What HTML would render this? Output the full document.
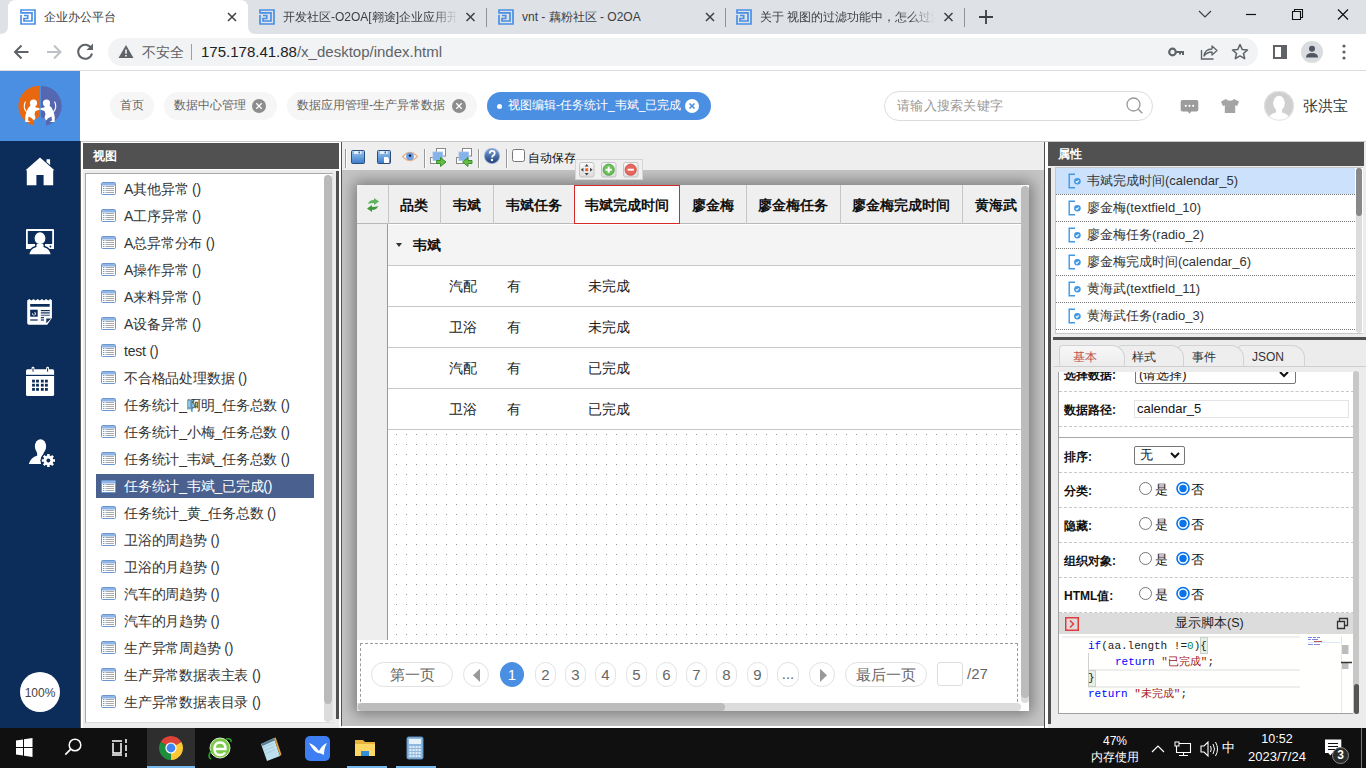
<!DOCTYPE html>
<html><head><meta charset="utf-8">
<style>
*{box-sizing:border-box;margin:0;padding:0}
html,body{width:1366px;height:768px;overflow:hidden;background:#fff;font-family:"Liberation Sans",sans-serif;color:#333;font-size:13px}
.a{position:absolute}
.nw{white-space:nowrap}
/* chrome */
#tabstrip{left:0;top:0;width:1366px;height:34px;background:#dee1e6}
.tab{top:0;height:34px;width:240px}
.tab .t{position:absolute;left:36px;top:9px;font-size:12px;color:#3c4043;white-space:nowrap;overflow:hidden;width:175px}
.fav{left:12px;top:9px}
.fade{-webkit-mask-image:linear-gradient(90deg,#000 150px,transparent 175px)}
.sep{width:1px;height:20px;background:#8b8d91;top:7px}
#toolbar{left:0;top:34px;width:1366px;height:37px;background:#fff;border-bottom:1px solid #dadce0}
#omni{left:108px;top:38px;width:1150px;height:28px;border-radius:14px;background:#f1f3f4}
/* app */
#logo{left:0;top:71px;width:80px;height:70px;background:#4a8fe1}
#nav{left:0;top:141px;width:80px;height:587px;background:#0c2c59}
#apphead{left:80px;top:71px;width:1286px;height:70px;background:#fff}
.pill{top:92px;height:28px;border-radius:14px;background:#f6f6f6;font-size:12px;color:#666;line-height:27px;white-space:nowrap}
.xc{position:absolute;top:7px;width:14px;height:14px;border-radius:7px;background:#8d8d8d}
.vi{position:absolute;left:0;width:218px;height:27px;white-space:nowrap;font-size:14px;color:#333;line-height:27px}
.vi span{position:absolute;left:28px;top:2px;letter-spacing:-0.2px}
.vi.sel span{top:0}
.vic{position:absolute;left:5px;top:8px;display:block}
.vi.sel{background:#4a6190;color:#fff;top:300px;height:24px;line-height:24px}
.vi.sel .vic{top:6px}
.xc svg{display:block}
.hl{position:absolute;left:31px;width:640px;height:1px;background:#c8c8c8}
.vl{position:absolute;top:0;width:1px;height:39px;background:#c6c6c6}
.th{position:absolute;top:1px;height:39px;line-height:39px;text-align:center;font-size:14px;font-weight:bold;color:#111;white-space:nowrap}
.td{position:absolute;font-size:14px;color:#222;line-height:20px;white-space:nowrap;letter-spacing:0}
.dots{background-image:radial-gradient(circle at 0.5px 0.5px,#9a9a9a 0.6px,transparent 0.9px);background-size:10px 10px;background-position:8px 4px}
.pg{position:absolute;top:477px;height:25px;border:1px solid #e2e2e2;border-radius:12px;text-align:center;font-size:15px;color:#666;line-height:23px;white-space:nowrap;background:#fff}
.pi{position:absolute;left:0;width:299px;height:27px;border-bottom:1px dotted #777;white-space:nowrap;font-size:13px;color:#333;line-height:26px}
.pi span{position:absolute;left:31px;top:0}
.pic{position:absolute;left:11px;top:5px;display:block}
.ptab{position:absolute;top:345px;height:21px;border:1px solid #d2d2d2;border-bottom:0;border-radius:4px 13px 0 0;background:#eeeeee;font-size:12px;color:#333;line-height:23px;padding-left:13px}
.lab{position:absolute;left:5px;font-size:12px;font-weight:bold;color:#111;line-height:18px;white-space:nowrap;margin-top:1px}
.dl{position:absolute;left:0;width:295px;height:0;border-top:1px dashed #c8c8c8}
.ro{position:absolute;left:96px;font-size:13px;color:#111;line-height:18px}
.ro2{position:absolute;left:132px;font-size:13px;color:#111;line-height:18px}
.code{position:absolute;font-family:"Liberation Mono",monospace;font-size:11px;line-height:16px;color:#222;white-space:pre;margin-top:1px}
.kw{color:#0000ff}.st{color:#a31515}
#taskbar{left:0;top:728px;width:1366px;height:40px;background:#101010}
</style></head><body>

<!-- ============ CHROME TAB STRIP ============ -->
<div id="tabstrip" class="a"></div>
<svg class="a" style="left:0;top:0" width="1366" height="34">
  <path d="M0 34 Q8 34 8 26 L8 8 Q8 0 16 0 L240 0 Q248 0 248 8 L248 26 Q248 34 256 34 Z" fill="#fff"/>
</svg>
<div class="a tab" style="left:8px">
  <svg class="a fav" width="16" height="16" viewBox="0 0 16 16"><use href="#favi"/></svg>
  <div class="t">企业办公平台</div>
</div>
<div class="a tab" style="left:247px">
  <svg class="a fav" width="16" height="16" viewBox="0 0 16 16"><use href="#favi"/></svg>
  <div class="t fade">开发社区-O2OA[翱途]企业应用开发平台</div>
</div>
<div class="a tab" style="left:486px">
  <svg class="a fav" width="16" height="16" viewBox="0 0 16 16"><use href="#favi"/></svg>
  <div class="t">vnt - 藕粉社区 - O2OA</div>
</div>
<div class="a tab" style="left:724px">
  <svg class="a fav" width="16" height="16" viewBox="0 0 16 16"><use href="#favi"/></svg>
  <div class="t fade">关于 视图的过滤功能中，怎么过滤</div>
</div>
<svg width="0" height="0" style="position:absolute">
  <defs>
   <g id="favi"><path d="M1 6V15H15V1H1V3.8H12V12H4V9.5H7.7V6.5H4" stroke="#4a90e6" stroke-width="1.7" fill="none" stroke-linejoin="miter"/></g>
   <g id="xx"><path d="M-4 -4L4 4M4 -4L-4 4" stroke="#3c4043" stroke-width="1.5"/></g>
   <g id="listico"><rect x="0.5" y="0.5" width="14" height="12" rx="1" fill="#fff" stroke="#6b97d2"/><rect x="1" y="1" width="13" height="2.5" fill="#8fb4e6"/><path d="M4.5 4.5h8.5M4.5 6.5h8.5M4.5 8.5h8.5M4.5 10.5h8.5" stroke="#a9a9a9" stroke-width="1"/><path d="M2 4.5h1.4M2 6.5h1.4M2 8.5h1.4M2 10.5h1.4" stroke="#46a6f5" stroke-width="1"/></g>
   <g id="propico"><path d="M8 1.2H2.2V14.8H8" stroke="#3f98e6" stroke-width="1.4" fill="none"/><circle cx="10.4" cy="8.2" r="3.3" fill="#3f98e6"/><path d="M8.8 8.3l1.1 1.1 1.9-2" stroke="#fff" stroke-width="1.1" fill="none"/></g>
  </defs>
</svg>
<svg class="a" style="left:0;top:0" width="1366" height="34">
  <use href="#xx" x="232" y="17"/><use href="#xx" x="470.5" y="17"/><use href="#xx" x="710" y="17"/><use href="#xx" x="948.5" y="17"/>
  <path d="M486.5 8v19M725.5 8v19M964.5 8v19" stroke="#8f9297" stroke-width="1"/>
  <path d="M986 10v14M979 17h14" stroke="#3c4043" stroke-width="1.8"/>
  <path d="M1199 11l6 6 6-6" stroke="#3c4043" stroke-width="1.2" fill="none"/>
  <path d="M1246 14.5h10" stroke="#111" stroke-width="1.2"/>
  <path d="M1292.5 11.5h8v8h-8z" stroke="#111" stroke-width="1.1" fill="none"/>
  <path d="M1294.5 11.5v-2h8v8h-2" stroke="#111" stroke-width="1.1" fill="none"/>
  <path d="M1338 9.5l10 10M1348 9.5l-10 10" stroke="#111" stroke-width="1.2"/>
</svg>

<!-- ============ CHROME TOOLBAR ============ -->
<div id="toolbar" class="a"></div>
<div id="omni" class="a"></div>
<svg class="a" style="left:0;top:34px" width="1366" height="37">
  <!-- back -->
  <path d="M28.5 18H16M21.5 11.5L15 18l6.5 6.5" stroke="#5f6368" stroke-width="2" fill="none"/>
  <path d="M47 18h12.5M54 11.5l6.5 6.5-6.5 6.5" stroke="#bdc1c6" stroke-width="2" fill="none"/>
  <!-- reload -->
  <path d="M91.2 14.2A7 7 0 1 0 92 19.5" stroke="#5f6368" stroke-width="2" fill="none"/>
  <path d="M93 9.5v6.5h-6.5z" fill="#5f6368"/>
  <!-- warning -->
  <path d="M126 11L133.5 24h-15z" fill="#5f6368"/>
  <path d="M126 15.5v4.2M126 21v1.5" stroke="#fff" stroke-width="1.5"/>
  <path d="M191.5 10v16" stroke="#9aa0a6" stroke-width="1"/>
  <!-- key -->
  <circle cx="1172.5" cy="18" r="3.3" stroke="#5f6368" stroke-width="2.2" fill="none"/>
  <path d="M1175.5 18h7.5v3M1180 18v2.5" stroke="#5f6368" stroke-width="2" fill="none"/>
  <!-- share -->
  <path d="M1201.5 16v9h12" stroke="#5f6368" stroke-width="1.4" fill="none"/>
  <path d="M1204 22q1-7 8-7v-3l5 4.5-5 4.5v-3q-5 0-8 4z" stroke="#5f6368" stroke-width="1.3" fill="none" stroke-linejoin="round"/>
  <!-- star -->
  <path d="M1240 10.5l2.2 4.9 5.3.5-4 3.6 1.2 5.2-4.7-2.8-4.7 2.8 1.2-5.2-4-3.6 5.3-.5z" stroke="#5f6368" stroke-width="1.5" fill="none" stroke-linejoin="round"/>
  <!-- sidebar -->
  <rect x="1273" y="11" width="14" height="14" fill="#5f6368"/><rect x="1275" y="13" width="6" height="10" fill="#fff"/>
  <!-- profile -->
  <circle cx="1312" cy="18" r="11" fill="#dadce0"/>
  <circle cx="1312" cy="14.8" r="3" fill="#4e5563"/>
  <path d="M1306 23.5q0-4.5 6-4.5t6 4.5z" fill="#4e5563"/>
  <circle cx="1344" cy="12" r="1.6" fill="#5f6368"/><circle cx="1344" cy="18" r="1.6" fill="#5f6368"/><circle cx="1344" cy="24" r="1.6" fill="#5f6368"/>
</svg>
<div class="a nw" style="left:142px;top:42px;font-size:14px;color:#5f6368;line-height:20px">不安全</div>
<div class="a nw" style="left:201px;top:42px;font-size:15px;color:#202124;line-height:20px">175.178.41.88<span style="color:#5f6368">/x_desktop/index.html</span></div>

<!-- ============ APP ============ -->
<div id="logo" class="a"></div>
<svg class="a" style="left:0;top:71px" width="80" height="70" viewBox="0 0 80 70">
  <path d="M39 15A20 20 0 0 0 34 54.5L34 49Q39 46 39 46Z" fill="#e8680f"/>
  <path d="M41 15A20 20 0 0 1 46 54.5L46 49Q41 46 41 46Z" fill="#5567b0"/>
  <path d="M39 15A20 20 0 0 0 21 40L39 40Z" fill="#e8680f"/>
  <!-- lions -->
  <g fill="#fff">
    <circle cx="33.5" cy="32" r="3.6"/><circle cx="46.5" cy="32" r="3.6"/>
    <path d="M31.0 34.0 L34.0 33.5 L36.0 36.5 L39.5 37.3 L39.5 38.8 L35.5 40.0 L34.5 43.0 L35.5 47.0 L34.0 49.5 L31.5 47.0 L28.5 45.5 L28.0 49.5 L30.5 51.0 L25.3 51.0 L25.2 46.0 L26.3 41.0 L28.5 36.5Z"/>
    <path d="M49.0 34.0 L46.0 33.5 L44.0 36.5 L40.5 37.3 L40.5 38.8 L44.5 40.0 L45.5 43.0 L44.5 47.0 L46.0 49.5 L48.5 47.0 L51.5 45.5 L52.0 49.5 L49.5 51.0 L54.7 51.0 L54.8 46.0 L53.7 41.0 L51.5 36.5Z"/>
  </g>
  <path d="M26.5 41Q22.5 36 25.5 30.5M53.5 41Q57.5 36 54.5 30.5" stroke="#fff" stroke-width="1.1" fill="none"/>
</svg>
<div id="nav" class="a"></div>
<svg class="a" style="left:0;top:141px" width="80" height="587" viewBox="0 141 80 587">
  <g fill="#fff">
    <!-- home -->
    <path d="M40 157.5L25.5 170.3h1.3v14.9h9.6v-10.3h7.2v10.3h9.6V170.3h1.3z"/>
    <path d="M46.5 159.3h3.6v5.8l-3.6-3.1z"/>
    <!-- monitor person -->
    <path d="M27 229h26a1 1 0 0 1 1 1v19h-28v-19a1 1 0 0 1 1-1z M27.8 231v13h24.4v-13z" fill-rule="evenodd"/>
    <g stroke="#0c2c59" stroke-width="1.4">
      <path d="M35.8 243.5h8.4v3q6.3 1.6 7.3 8.5h-23q1-6.9 7.3-8.5z"/>
      <ellipse cx="40" cy="238.2" rx="6.1" ry="6.6"/>
    </g>
    <path d="M37 244h6v3h-6z"/>
    <circle cx="50.5" cy="246.5" r="0.9" fill="#0c2c59"/>
    <!-- news -->
    <path d="M27.2 300.6l2.1-1.5 2.1 1.5 2.1-1.5 2.1 1.5 2.1-1.5 2.1 1.5 2.1-1.5 2.1 1.5 2.1-1.5 2.1 1.5 2.1-1.5 1.6 1.2V318L47.3 324.7H28.9a1.7 1.7 0 0 1-1.7-1.7z"/>
    <g fill="#0c2c59">
      <rect x="30.2" y="304" width="19.5" height="2.7"/>
      <rect x="30.2" y="309.7" width="7.5" height="7"/>
      <rect x="40.8" y="310" width="9" height="1.2"/>
      <rect x="40.8" y="312.3" width="9" height="1.2"/>
      <rect x="40.8" y="314.6" width="9" height="1.5" fill="#6a7f9c"/>
      <rect x="40.8" y="317.1" width="3.2" height="1.2"/>
      <rect x="40.8" y="319.4" width="3.2" height="1.2"/>
      <rect x="30.2" y="319.4" width="7.5" height="1.2"/>
      <path d="M46.3 318.4H51.2L46.3 323.3z"/>
    </g>
    <path d="M32.5 313.2a1.6 1.6 0 1 0 3 -0.4h-1.4" stroke="#fff" stroke-width="0.8" fill="none"/>
    <!-- calendar -->
    <rect x="26" y="369.2" width="28.1" height="26.9" rx="1.6"/>
    <rect x="31.6" y="366.8" width="2.8" height="5.2" rx="1.2"/><rect x="46.2" y="366.8" width="2.8" height="5.2" rx="1.2"/>
    <g fill="#0c2c59">
      <rect x="26" y="374.8" width="28.1" height="1.2"/>
      <rect x="32.5" y="368.3" width="1" height="3.4"/><rect x="47.1" y="368.3" width="1" height="3.4"/>
      <rect x="32.1" y="379.7" width="2.8" height="2.8"/><rect x="32.1" y="383.8" width="2.8" height="2.8"/><rect x="32.1" y="388.0" width="2.8" height="2.8"/><rect x="36.1" y="379.7" width="2.8" height="2.8"/><rect x="36.1" y="383.8" width="2.8" height="2.8"/><rect x="36.1" y="388.0" width="2.8" height="2.8"/><rect x="40.9" y="379.7" width="2.8" height="2.8"/><rect x="40.9" y="383.8" width="2.8" height="2.8"/><rect x="40.9" y="388.0" width="2.8" height="2.8"/><rect x="45.0" y="379.7" width="2.8" height="2.8"/><rect x="45.0" y="383.8" width="2.8" height="2.8"/><rect x="45.0" y="388.0" width="2.8" height="2.8"/>
    </g>
    <!-- user settings -->
    <ellipse cx="40.5" cy="446.6" rx="5.6" ry="7.4"/>
    <path d="M36.8 451.5L37.3 455.6Q30.8 457.6 28.8 464H43V455.6L44 451.5z"/>
    </g>
  <g transform="translate(48.4 460.5)">
    <circle r="8" fill="#0c2c59"/>
    <circle r="4.9" fill="#fff"/>
    <path d="M0-6.6v13.2M-6.6 0h13.2M-4.67-4.67l9.34 9.34M4.67-4.67l-9.34 9.34" stroke="#fff" stroke-width="2.5"/>
    <circle r="1.9" fill="#0c2c59"/>
  </g>
  <circle cx="40" cy="692" r="20" fill="#fff"/>
</svg>
<div class="a nw" style="left:20px;top:685px;width:40px;text-align:center;font-size:12px;color:#444;line-height:16px">100%</div>

<!-- header pills -->
<div class="a pill" style="left:110px;width:44px;padding-left:10px">首页</div>
<div class="a pill" style="left:164px;width:113px;padding-left:10px">数据中心管理<span class="xc" style="left:88px"><svg width="14" height="14"><path d="M4.3 4.3l5.4 5.4M9.7 4.3l-5.4 5.4" stroke="#fff" stroke-width="1.3"/></svg></span></div>
<div class="a pill" style="left:287px;width:190px;padding-left:10px">数据应用管理-生产异常数据<span class="xc" style="left:165px"><svg width="14" height="14"><path d="M4.3 4.3l5.4 5.4M9.7 4.3l-5.4 5.4" stroke="#fff" stroke-width="1.3"/></svg></span></div>
<div class="a pill" style="left:487px;width:224px;padding-left:21px;background:#4a8fe1;color:#fff">视图编辑-任务统计_韦斌_已完成<span style="position:absolute;left:10px;top:12px;width:5px;height:5px;border-radius:3px;background:#fff"></span><span class="xc" style="left:198px;background:#fff"><svg width="14" height="14"><path d="M4.5 4.5l5 5M9.5 4.5l-5 5" stroke="#4a8fe1" stroke-width="1.6"/></svg></span></div>

<!-- search -->
<div class="a" style="left:884px;top:91px;width:269px;height:30px;border:1px solid #dcdcdc;border-radius:15px;background:#fff"></div>
<div class="a nw" style="left:897px;top:97px;font-size:13px;color:#999;line-height:18px;letter-spacing:0.3px">请输入搜索关键字</div>
<svg class="a" style="left:1120px;top:91px" width="240" height="30">
  <circle cx="13.5" cy="13.5" r="6.5" stroke="#999" stroke-width="1.3" fill="none"/>
  <path d="M18.3 18.3l4 4" stroke="#999" stroke-width="1.6"/>
  <!-- chat -->
  <path d="M62.5 9h14a1.8 1.8 0 0 1 1.8 1.8v8a1.8 1.8 0 0 1-1.8 1.8h-5.2l-1.8 2.2-1.8-2.2h-5.2a1.8 1.8 0 0 1-1.8-1.8v-8a1.8 1.8 0 0 1 1.8-1.8z" fill="#9c9c9c"/>
  <circle cx="65.8" cy="14.8" r="1.1" fill="#fff"/><circle cx="69.5" cy="14.8" r="1.1" fill="#fff"/><circle cx="73.2" cy="14.8" r="1.1" fill="#fff"/>
  <!-- shirt -->
  <path d="M106 8l-5 2.6 1.8 4.4 2-0.8v7.8h10.4v-7.8l2 0.8 1.8-4.4-5-2.6q-0.8 1.8-4 1.8t-4-1.8z" fill="#a4a4a4"/>
  <!-- avatar -->
  <defs><clipPath id="avc"><circle cx="159" cy="14.8" r="15"/></clipPath></defs>
  <circle cx="159" cy="14.8" r="15" fill="#cfcfcf"/>
  <g clip-path="url(#avc)" fill="#fff">
    <ellipse cx="159" cy="12.3" rx="5.8" ry="7.5"/>
    <path d="M156 18h6v3.5q6 1 9.5 7.5v3h-25v-3q3.5-6.5 9.5-7.5z"/>
  </g>
  <circle cx="159" cy="14.8" r="14.5" fill="none" stroke="#e6e6e6" stroke-width="1"/>
</svg>
<div class="a nw" style="left:1303px;top:96px;font-size:14.5px;color:#333;line-height:20px">张洪宝</div>

<!-- ============ VIEWS PANEL ============ -->
<div class="a" style="left:80px;top:141px;width:262px;height:587px;background:#ececec"></div>
<div class="a" style="left:80px;top:141px;width:1px;height:587px;background:#5a5a5a"></div>
<div class="a" style="left:81px;top:142px;width:2px;height:586px;background:#fff"></div>
<div class="a" style="left:81px;top:142px;width:258px;height:1px;background:#fff"></div>
<div class="a" style="left:83px;top:169px;width:256px;height:1px;background:#fff"></div>
<div class="a" style="left:83px;top:143px;width:256px;height:26px;background:#515151"></div>
<div class="a nw" style="left:93px;top:148px;font-size:12px;font-weight:bold;color:#fff;line-height:16px">视图</div>
<div class="a" style="left:85px;top:173px;width:248px;height:550px;background:#fff;border:1px solid #a8a8a8;border-right:1px solid #e4e4e4;border-bottom-color:#dcdcdc"></div>
<div class="a" style="left:324px;top:703px;width:8px;height:19px;background:#dcdcdc;border-radius:0 0 4px 4px"></div>
<div class="a" style="left:324px;top:175px;width:8px;height:529px;background:#bababa;border-radius:4px"></div>
<div class="a" style="left:336px;top:171px;width:3px;height:548px;background:#4f4f4f"></div>
<div class="a" style="left:339px;top:141px;width:2px;height:587px;background:#fff"></div>
<div class="a" style="left:341px;top:142px;width:1px;height:584px;background:#505050"></div>
<div id="vlist" class="a" style="left:96px;top:174px;width:218px">
<div class="vi" style="top:0px"><svg class="vic" width="15" height="13" viewBox="0 0 15 13"><use href="#listico"/></svg><span>A其他异常 ()</span></div>
<div class="vi" style="top:27px"><svg class="vic" width="15" height="13" viewBox="0 0 15 13"><use href="#listico"/></svg><span>A工序异常 ()</span></div>
<div class="vi" style="top:54px"><svg class="vic" width="15" height="13" viewBox="0 0 15 13"><use href="#listico"/></svg><span>A总异常分布 ()</span></div>
<div class="vi" style="top:81px"><svg class="vic" width="15" height="13" viewBox="0 0 15 13"><use href="#listico"/></svg><span>A操作异常 ()</span></div>
<div class="vi" style="top:108px"><svg class="vic" width="15" height="13" viewBox="0 0 15 13"><use href="#listico"/></svg><span>A来料异常 ()</span></div>
<div class="vi" style="top:135px"><svg class="vic" width="15" height="13" viewBox="0 0 15 13"><use href="#listico"/></svg><span>A设备异常 ()</span></div>
<div class="vi" style="top:162px"><svg class="vic" width="15" height="13" viewBox="0 0 15 13"><use href="#listico"/></svg><span>test ()</span></div>
<div class="vi" style="top:189px"><svg class="vic" width="15" height="13" viewBox="0 0 15 13"><use href="#listico"/></svg><span>不合格品处理数据 ()</span></div>
<div class="vi" style="top:216px"><svg class="vic" width="15" height="13" viewBox="0 0 15 13"><use href="#listico"/></svg><span>任务统计_啊明_任务总数 ()</span></div>
<div class="vi" style="top:243px"><svg class="vic" width="15" height="13" viewBox="0 0 15 13"><use href="#listico"/></svg><span>任务统计_小梅_任务总数 ()</span></div>
<div class="vi" style="top:270px"><svg class="vic" width="15" height="13" viewBox="0 0 15 13"><use href="#listico"/></svg><span>任务统计_韦斌_任务总数 ()</span></div>
<div class="vi sel" style="top:300px"><svg class="vic" width="15" height="13" viewBox="0 0 15 13"><use href="#listico"/></svg><span>任务统计_韦斌_已完成()</span></div>
<div class="vi" style="top:324px"><svg class="vic" width="15" height="13" viewBox="0 0 15 13"><use href="#listico"/></svg><span>任务统计_黄_任务总数 ()</span></div>
<div class="vi" style="top:351px"><svg class="vic" width="15" height="13" viewBox="0 0 15 13"><use href="#listico"/></svg><span>卫浴的周趋势 ()</span></div>
<div class="vi" style="top:378px"><svg class="vic" width="15" height="13" viewBox="0 0 15 13"><use href="#listico"/></svg><span>卫浴的月趋势 ()</span></div>
<div class="vi" style="top:405px"><svg class="vic" width="15" height="13" viewBox="0 0 15 13"><use href="#listico"/></svg><span>汽车的周趋势 ()</span></div>
<div class="vi" style="top:432px"><svg class="vic" width="15" height="13" viewBox="0 0 15 13"><use href="#listico"/></svg><span>汽车的月趋势 ()</span></div>
<div class="vi" style="top:459px"><svg class="vic" width="15" height="13" viewBox="0 0 15 13"><use href="#listico"/></svg><span>生产异常周趋势 ()</span></div>
<div class="vi" style="top:486px"><svg class="vic" width="15" height="13" viewBox="0 0 15 13"><use href="#listico"/></svg><span>生产异常数据表主表 ()</span></div>
<div class="vi" style="top:513px"><svg class="vic" width="15" height="13" viewBox="0 0 15 13"><use href="#listico"/></svg><span>生产异常数据表目录 ()</span></div>
</div>

<!-- ============ CENTER ============ -->
<div class="a" style="left:342px;top:141px;width:703px;height:29px;background:#eeeeee;border-top:1px solid #d0d0d0"></div>
<div class="a" style="left:342px;top:170px;width:702px;height:556px;background:#c5c5c5;overflow:hidden">
  <div class="a" style="left:15px;top:15px;width:672px;height:526px;background:#fff;box-shadow:0 0 14px 3px #787878"></div>
</div>
<div class="a" style="left:342px;top:726px;width:703px;height:2px;background:#fff"></div>
<div class="a" style="left:1044px;top:141px;width:1px;height:587px;background:#505050"></div>
<!-- toolbar icons -->
<svg class="a" style="left:342px;top:142px" width="300" height="28">
  <path d="M3.5 7v19M82.5 7v19M136.5 7v19M164.5 7v19" stroke="#999" stroke-width="1"/>
  <path d="M4.5 7v19M83.5 7v19M137.5 7v19M165.5 7v19" stroke="#fff" stroke-width="1"/>
  <!-- save -->
  <defs>
    <linearGradient id="gsv" x1="0" y1="0" x2="0" y2="1"><stop offset="0" stop-color="#9cc8f2"/><stop offset="1" stop-color="#3b7bc9"/></linearGradient>
    <linearGradient id="ghp" x1="0" y1="0" x2="0" y2="1"><stop offset="0" stop-color="#7a9fd6"/><stop offset="1" stop-color="#1f3f7a"/></linearGradient>
  </defs>
  <g transform="translate(9 8)">
    <rect x="0.5" y="0.5" width="13" height="13" rx="1" fill="url(#gsv)" stroke="#2a4d80"/>
    <rect x="3" y="1" width="7.5" height="3" fill="#e3eefa"/>
    <rect x="7.5" y="1.5" width="1.5" height="2" fill="#3b6fb8"/>
  </g>
  <g transform="translate(35 8)">
    <rect x="0.5" y="0.5" width="13" height="13" rx="1" fill="url(#gsv)" stroke="#2a4d80"/>
    <rect x="3" y="1" width="7.5" height="3" fill="#e3eefa"/>
    <rect x="7.5" y="1.5" width="1.5" height="2" fill="#3b6fb8"/>
    <path d="M7 7h3.5l1.5 1.5V13H7z" fill="#fff"/>
  </g>
  <!-- eye -->
  <g transform="translate(60 8)">
    <path d="M0.8 6.5Q8-1.5 15.2 6.5Q8 14.5 0.8 6.5z" fill="#fff" stroke="#e7b48e" stroke-width="1.6"/>
    <circle cx="8" cy="6.3" r="3.9" fill="#6d9fe2"/>
    <circle cx="8" cy="5.6" r="1.2" fill="#111"/>
  </g>
  <!-- import/export -->
  <g transform="translate(88 6)">
    <rect x="6.5" y="0.5" width="9" height="7.5" fill="#fff" stroke="#8a8a8a"/>
    <rect x="0.5" y="9.5" width="8" height="6" fill="#fff" stroke="#8a8a8a"/>
    <rect x="3" y="4" width="9.5" height="8.5" fill="#86b2ea" stroke="#9fc0ec" stroke-width="0.8"/>
    <path d="M6.5 12.5h4v-3l5.5 4.5-5.5 4.5v-3h-4z" fill="#66bb44" stroke="#2f8a1f" stroke-width="0.9"/>
  </g>
  <g transform="translate(114 6)">
    <rect x="6.5" y="0.5" width="9" height="7.5" fill="#fff" stroke="#8a8a8a"/>
    <rect x="0.5" y="9.5" width="8" height="6" fill="#fff" stroke="#8a8a8a"/>
    <rect x="3" y="4" width="9.5" height="8.5" fill="#86b2ea" stroke="#9fc0ec" stroke-width="0.8"/>
    <path d="M16 12.5h-4v-3l-5.5 4.5 5.5 4.5v-3h4z" fill="#66bb44" stroke="#2f8a1f" stroke-width="0.9"/>
  </g>
  <!-- help -->
  <g transform="translate(150 14)">
    <circle r="8" fill="#9ab0d0"/>
    <circle r="7.2" fill="url(#ghp)"/>
    <path d="M-2.3-2.5q0-2.7 2.5-2.7t2.5 2.4q0 1.5-1.6 2.4-.9.6-.9 1.8" stroke="#fff" stroke-width="1.8" fill="none"/>
    <circle cx="0" cy="4" r="1.2" fill="#fff"/>
  </g>
  <rect x="170.5" y="7.5" width="12" height="12" rx="2" fill="#fff" stroke="#767676"/>
</svg>
<div class="a nw" style="left:528px;top:150px;font-size:12px;color:#111;line-height:16px">自动保存</div>
<!-- floating mini toolbar -->
<div class="a" style="left:575px;top:159px;width:68px;height:21px;background:#f0f0f0;border:1px solid #d4d4d4"></div>
<svg class="a" style="left:575px;top:159px" width="68" height="21">
  <defs><linearGradient id="gbt" x1="0" y1="0" x2="0" y2="1"><stop offset="0" stop-color="#fafafa"/><stop offset="1" stop-color="#dcdcdc"/></linearGradient></defs>
  <rect x="4.5" y="3.5" width="14.5" height="14.5" rx="2" fill="url(#gbt)" stroke="#c4c4c4"/>
  <path d="M11.7 5l-2 2.6h4zM11.7 16.5l-2-2.6h4zM5.8 10.7l2.6-2v4zM17.6 10.7l-2.6-2v4z" fill="#444"/>
  <rect x="10.3" y="9.3" width="2.8" height="2.8" fill="#f25a1a"/>
  <rect x="26.5" y="3.5" width="14.5" height="14.5" rx="2" fill="url(#gbt)" stroke="#c4c4c4"/>
  <circle cx="33.7" cy="10.7" r="5.6" fill="#6cc05a" stroke="#3f9a3a" stroke-width="0.8"/>
  <path d="M33.7 7.6v6.2M30.6 10.7h6.2" stroke="#fff" stroke-width="1.9"/>
  <rect x="48.5" y="3.5" width="14.5" height="14.5" rx="2" fill="url(#gbt)" stroke="#c4c4c4"/>
  <circle cx="55.7" cy="10.7" r="5.6" fill="#e8675c" stroke="#c8473c" stroke-width="0.8"/>
  <path d="M52.6 10.7h6.2" stroke="#fff" stroke-width="1.9"/>
</svg>

<!-- table -->
<div id="form" class="a" style="left:357px;top:185px;width:664px;height:518px;overflow:hidden;background:#fff">
  <div class="a" style="left:0;top:0;width:664px;height:39px;background:#efefef;border-bottom:1px solid #b9b9b9"></div>
  <div class="a" style="left:0;top:39px;width:31px;height:416px;background:#eeeeee;border-right:1px solid #9a9a9a"></div>
  <div class="a" style="left:31px;top:40px;width:640px;height:40px;background:#f4f4f4"></div>
  <div class="dots a" style="left:31px;top:245px;width:640px;height:210px"></div>
  <div class="hl" style="top:80px"></div><div class="hl" style="top:121px"></div><div class="hl" style="top:162px"></div><div class="hl" style="top:203px"></div><div class="hl" style="top:244px"></div>
  <div class="vl" style="left:31px"></div><div class="vl" style="left:83px"></div><div class="vl" style="left:136px"></div><div class="vl" style="left:389px"></div><div class="vl" style="left:483px"></div><div class="vl" style="left:605px"></div>
  <div class="a" style="left:217px;top:0;width:106px;height:39px;border:1px solid #d42a2a;background:#fff"></div>
  <div class="th" style="left:31px;width:52px">品类</div>
  <div class="th" style="left:83px;width:53px">韦斌</div>
  <div class="th" style="left:136px;width:81px">韦斌任务</div>
  <div class="th" style="left:217px;width:106px">韦斌完成时间</div>
  <div class="th" style="left:323px;width:66px">廖金梅</div>
  <div class="th" style="left:389px;width:94px">廖金梅任务</div>
  <div class="th" style="left:483px;width:122px">廖金梅完成时间</div>
  <div class="th" style="left:605px;width:68px">黄海武</div>
  <svg class="a" style="left:8px;top:12px" width="16" height="16" viewBox="0 0 16 16">
    <path d="M3 7q1-4 6-4V1l5 3.5-5 3.5V6q-4 0-6 1z" fill="#5fb35f"/>
    <path d="M13 9q-1 4-6 4v2L2 11.5 7 8v2q4 0 6-1z" fill="#3f9a3f"/>
  </svg>
  <svg class="a" style="left:38px;top:57px" width="8" height="6"><path d="M1 1h6l-3 4z" fill="#333"/></svg>
  <div class="a nw" style="left:56px;top:50px;font-size:14px;font-weight:bold;color:#111;line-height:20px">韦斌</div>
  <div class="td" style="top:91px;left:92px">汽配</div><div class="td" style="top:91px;left:150px">有</div><div class="td" style="top:91px;left:231px">未完成</div>
  <div class="td" style="top:132px;left:92px">卫浴</div><div class="td" style="top:132px;left:150px">有</div><div class="td" style="top:132px;left:231px">未完成</div>
  <div class="td" style="top:173px;left:92px">汽配</div><div class="td" style="top:173px;left:150px">有</div><div class="td" style="top:173px;left:231px">已完成</div>
  <div class="td" style="top:214px;left:92px">卫浴</div><div class="td" style="top:214px;left:150px">有</div><div class="td" style="top:214px;left:231px">已完成</div>
  <!-- pagination -->
  <div class="a" style="left:3px;top:458px;width:658px;height:64px;border:1px dashed #9a9a9a;background:#fff"></div>
  <div class="pg" style="left:14px;width:82px;border-radius:13px">第一页</div>
  <div class="pg" style="left:106px;width:26px;border-radius:13px"><svg width="26" height="25" style="display:block"><path d="M9 12.3l7-6.6v13.2z" fill="#999"/></svg></div>
  <div class="pg" style="left:143px;width:24px;background:#4a8fe1;border-color:#4a8fe1;color:#fff;border-radius:12px">1</div>
  <div class="pg" style="left:178px;width:21px">2</div>
  <div class="pg" style="left:208px;width:21px">3</div>
  <div class="pg" style="left:238px;width:21px">4</div>
  <div class="pg" style="left:269px;width:21px">5</div>
  <div class="pg" style="left:299px;width:21px">6</div>
  <div class="pg" style="left:329px;width:21px">7</div>
  <div class="pg" style="left:359px;width:21px">8</div>
  <div class="pg" style="left:390px;width:21px">9</div>
  <div class="pg" style="left:420px;width:22px;line-height:22px">...</div>
  <div class="pg" style="left:452px;width:26px;border-radius:13px"><svg width="26" height="25" style="display:block"><path d="M17 12.3l-7-6.6v13.2z" fill="#999"/></svg></div>
  <div class="pg" style="left:488px;width:82px;border-radius:13px">最后一页</div>
  <div class="a" style="left:580px;top:477px;width:26px;height:24px;border:1px solid #ddd;border-radius:3px"></div>
  <div class="a nw" style="left:610px;top:480px;font-size:15px;color:#666;line-height:18px">/27</div>
  <!-- scrollbars -->
  <div class="a" style="left:0;top:518px;width:664px;height:8px;background:#dcdcdc"></div>
  <div class="a" style="left:0;top:518px;width:368px;height:8px;background:#bcbcbc;border-radius:0 4px 4px 0"></div>
</div>
<div class="a" style="left:1021px;top:185px;width:8px;height:526px;background:#fff"></div>
<div class="a" style="left:1021px;top:186px;width:8px;height:517px;background:#dcdcdc;border-radius:4px"></div>
<div class="a" style="left:1021px;top:186px;width:8px;height:512px;background:#bcbcbc;border-radius:4px"></div>
<div class="a" style="left:357px;top:703px;width:664px;height:8px;background:#dcdcdc;border-radius:0 4px 4px 0"></div>
<div class="a" style="left:358px;top:703px;width:367px;height:8px;background:#bcbcbc;border-radius:4px"></div>

<!-- ============ PROPERTIES ============ -->
<div class="a" style="left:1045px;top:141px;width:321px;height:587px;background:#ececec"></div>
<div class="a" style="left:1045px;top:141px;width:3px;height:587px;background:#fff"></div>
<div class="a" style="left:1048px;top:142px;width:316px;height:24px;background:#515151"></div>
<div class="a nw" style="left:1058px;top:146px;font-size:12px;font-weight:bold;color:#fff;line-height:16px">属性</div>
<div class="a" style="left:1048px;top:168px;width:3px;height:556px;background:#4f4f4f"></div>
<div class="a" style="left:1055px;top:167px;width:308px;height:167px;background:#fff;border:1px solid #c8c8c8;border-right:0"></div>
<div class="a" style="left:1056px;top:168px;width:299px;height:26px;background:#cce2fc"></div>
<div id="plist" class="a" style="left:1056px;top:168px;width:299px">
  <div class="pi" style="top:0"><svg class="pic" width="14" height="16" viewBox="0 0 14 16"><use href="#propico"/></svg><span>韦斌完成时间(calendar_5)</span></div>
  <div class="pi" style="top:27px"><svg class="pic" width="14" height="16" viewBox="0 0 14 16"><use href="#propico"/></svg><span>廖金梅(textfield_10)</span></div>
  <div class="pi" style="top:54px"><svg class="pic" width="14" height="16" viewBox="0 0 14 16"><use href="#propico"/></svg><span>廖金梅任务(radio_2)</span></div>
  <div class="pi" style="top:81px"><svg class="pic" width="14" height="16" viewBox="0 0 14 16"><use href="#propico"/></svg><span>廖金梅完成时间(calendar_6)</span></div>
  <div class="pi" style="top:108px"><svg class="pic" width="14" height="16" viewBox="0 0 14 16"><use href="#propico"/></svg><span>黄海武(textfield_11)</span></div>
  <div class="pi" style="top:135px"><svg class="pic" width="14" height="16" viewBox="0 0 14 16"><use href="#propico"/></svg><span>黄海武任务(radio_3)</span></div>
</div>
<div class="a" style="left:1356px;top:168px;width:6px;height:165px;background:#dcdcdc;border-radius:3px"></div>
<div class="a" style="left:1356px;top:168px;width:6px;height:48px;background:#888;border-radius:3px"></div>
<div class="a" style="left:1053px;top:337px;width:313px;height:3px;background:#4f4f4f"></div>
<!-- tabs -->
<div class="a" style="left:1053px;top:366px;width:313px;height:1px;background:#d0d0d0;z-index:5"></div>
<div class="ptab" style="left:1238px;width:67px;z-index:1">JSON</div>
<div class="ptab" style="left:1178px;width:66px;z-index:2">事件</div>
<div class="ptab" style="left:1118px;width:66px;z-index:3">样式</div>
<div class="ptab" style="left:1059px;width:66px;z-index:4;color:#c0504d;background:linear-gradient(#f7f7f7,#ececec)">基本</div>
<!-- form -->
<div class="a" style="left:1058px;top:371px;width:295px;height:243px;background:#fff;border-left:1px solid #a0a0a0;overflow:hidden">
  <div class="lab" style="top:-6px">选择数据:</div>
  <div class="a" style="left:76px;top:-7px;width:161px;height:20px;border:1px solid #767676;border-radius:2px"></div>
  <div class="a nw" style="left:80px;top:-5px;font-size:13px;line-height:18px;color:#111">(请选择)</div>
  <svg class="a" style="left:218px;top:-1px" width="14" height="10"><path d="M3 2l4 4 4-4" stroke="#111" stroke-width="2" fill="none"/></svg>
  <div class="dl" style="top:20px"></div>
  <div class="a" style="left:75px;top:29px;width:215px;height:18px;border:1px solid #e4e4e4"></div>
  <div class="lab" style="top:29px">数据路径:</div>
  <div class="a nw" style="left:78px;top:29px;font-size:13px;line-height:18px;color:#111">calendar_5</div>
  <div class="dl" style="top:55px"></div>
  <div class="a" style="left:0;top:66px;width:295px;height:1px;background:#a8a8a8"></div>
  <div class="lab" style="top:76px">排序:</div>
  <div class="a" style="left:75px;top:75px;width:51px;height:19px;border:1px solid #767676;border-radius:2px"></div>
  <div class="a nw" style="left:81px;top:75px;font-size:13px;line-height:18px;color:#111">无</div>
  <svg class="a" style="left:109px;top:80px" width="14" height="10"><path d="M3 2l4 4 4-4" stroke="#111" stroke-width="2" fill="none"/></svg>
  <div class="dl" style="top:101px"></div>
  <div class="lab" style="top:110px">分类:</div>
  <div class="dl" style="top:136px"></div>
  <div class="lab" style="top:145px">隐藏:</div>
  <div class="dl" style="top:171px"></div>
  <div class="lab" style="top:180px">组织对象:</div>
  <div class="dl" style="top:206px"></div>
  <div class="lab" style="top:215px">HTML值:</div>
  <div class="dl" style="top:241px"></div>
  <svg class="a" style="left:0;top:98px" width="200" height="140">
    <g id="radrow">
      <circle cx="86.5" cy="19.5" r="6" fill="#fff" stroke="#767676" stroke-width="1"/>
      <circle cx="124" cy="19.5" r="6" fill="#fff" stroke="#0a74e8" stroke-width="1.6"/>
      <circle cx="124" cy="19.5" r="3.7" fill="#0a74e8"/>
    </g>
    <use href="#radrow" y="35"/><use href="#radrow" y="70"/><use href="#radrow" y="105"/>
  </svg>
  <div class="ro" style="top:110px">是</div><div class="ro2" style="top:110px">否</div>
  <div class="ro" style="top:145px">是</div><div class="ro2" style="top:145px">否</div>
  <div class="ro" style="top:180px">是</div><div class="ro2" style="top:180px">否</div>
  <div class="ro" style="top:215px">是</div><div class="ro2" style="top:215px">否</div>
</div>
<div class="a" style="left:1058px;top:370px;width:295px;height:2px;background:#ececec"></div>
<div class="a" style="left:1353px;top:371px;width:6px;height:343px;background:#c8c8c8;border-radius:3px"></div>
<!-- script -->
<div class="a" style="left:1058px;top:613px;width:295px;height:21px;background:#dcdcdc;border-left:1px solid #a0a0a0"></div>
<svg class="a" style="left:1065px;top:617px" width="14" height="14"><rect x="0.75" y="0.75" width="12.5" height="12.5" fill="none" stroke="#e53a3a" stroke-width="1.5"/><path d="M5 3.5l3.5 3.5L5 10.5" stroke="#e53a3a" stroke-width="1.5" fill="none"/></svg>
<div class="a nw" style="left:1175px;top:615px;font-size:12.5px;line-height:17px;color:#222">显示脚本(S)</div>
<svg class="a" style="left:1336px;top:617px" width="13" height="13"><path d="M1.5 4.5h7v7h-7z M3.5 4.5v-3h8v7h-3" stroke="#333" stroke-width="1.3" fill="none"/></svg>
<div class="a" style="left:1058px;top:634px;width:295px;height:80px;background:#fffffe;border-left:1px solid #a0a0a0;border-bottom:1px solid #a0a0a0"></div>
<div class="a" style="left:1062px;top:636px;width:238px;height:2px;background:#f0f0f0"></div>
<div class="a" style="left:1088px;top:669px;width:212px;height:2px;background:#eeeeee"></div>
<div class="a" style="left:1088px;top:686px;width:212px;height:2px;background:#eeeeee"></div>
<div class="a" style="left:1088px;top:653px;width:1px;height:17px;background:#d0d0d0"></div>
<div class="a" style="left:1200px;top:637px;width:8px;height:17px;background:#e6eee6;border:1px solid #c8d0c8"></div>
<div class="a" style="left:1088px;top:670px;width:8px;height:17px;background:#e6eee6;border:1px solid #c8d0c8"></div>
<div class="code" style="left:1088px;top:637px"><span class="kw">if</span>(aa.length !=<span style="color:#098658">0</span>){</div>
<div class="code" style="left:1115px;top:653px"><span class="kw">return</span> <span class="st">"已完成"</span>;</div>
<div class="code" style="left:1088px;top:669px">}</div>
<div class="code" style="left:1088px;top:685px"><span class="kw">return</span> <span class="st">"未完成"</span>;</div>
<svg class="a" style="left:1305px;top:636px" width="50" height="77">
  <path d="M3 1.5h4M8 1.5h3M12 1.5h3M3 3.5h3M7 3.5h6" stroke="#8080e0" stroke-width="1"/>
  <path d="M9 5.5h8" stroke="#c05050" stroke-width="1"/>
  <path d="M3 6.5h32" stroke="#d8e6f8" stroke-width="1"/>
  <path d="M3 8.5h5M9 8.5h6" stroke="#8080d0" stroke-width="0.9"/>
  <path d="M36.5 0v77" stroke="#e8e8e8" stroke-width="1"/>
  <rect x="37" y="9" width="6.5" height="9" fill="#bdbdbd"/>
  <rect x="37" y="26" width="6.5" height="7" fill="#bdbdbd"/>
  <path d="M36 26.5h11" stroke="#333" stroke-width="1.5"/>
</svg>
<div class="a" style="left:1354px;top:684px;width:5px;height:30px;background:#555;border-radius:3px"></div>

<div class="a" style="left:81px;top:141px;width:1285px;height:1px;background:#c8c8c8"></div>
<div id="taskbar" class="a"></div>
<svg class="a" style="left:0;top:728px" width="1366" height="40">
  <!-- windows -->
  <path d="M16 12.5l7-1v7.5h-7zM24 11.3l8.5-1.2V19h-8.5zM16 20h7v7.5l-7-1zM24 20h8.5v8.9L24 27.7z" fill="#fff"/>
  <!-- search -->
  <circle cx="75" cy="17" r="5.8" stroke="#fff" stroke-width="1.5" fill="none"/>
  <path d="M70.8 21.2l-5.5 5.5" stroke="#fff" stroke-width="1.7"/>
  <!-- task view -->
  <path d="M112 13h10M112 27h10M113 15v10h8v-10" stroke="#fff" stroke-width="1.5" fill="none"/>
  <path d="M126 11v4M126 17v6M126 25v4" stroke="#fff" stroke-width="1.5"/>
  <!-- chrome -->
  <rect x="147" y="0" width="48" height="40" fill="#2e2e2e"/>
  <rect x="147" y="38" width="48" height="2" fill="#76b9ed"/>
  <g transform="translate(171 20)">
    <path d="M0 0L-10.39 -6A12 12 0 0 1 10.39 -6Z" fill="#db4437"/>
    <path d="M0 0L10.39 -6A12 12 0 0 1 0 12Z" fill="#fcc934"/>
    <path d="M0 0L0 12A12 12 0 0 1 -10.39 -6Z" fill="#1e8e3e"/>
    <circle r="5.6" fill="#fff"/><circle r="4.4" fill="#4285f4"/>
  </g>
  <!-- ie -->
  <g transform="translate(220 20)">
    <circle r="10" fill="#7cc94a"/>
    <circle r="10" fill="none" stroke="#d8f0c0" stroke-width="1"/>
    <path d="M-5.5 1h11q0-6.5-5.5-6.5t-5.5 6.5q0 6 5.5 6 3.5 0 5-2.5" stroke="#fff" stroke-width="2.4" fill="none"/>
    <path d="M-9 11q-4-2 0-8M6-9q6-1 5 3" stroke="#2e9e2e" stroke-width="1.6" fill="none"/>
  </g>
  <!-- notepad -->
  <g transform="translate(257 9)">
    <path d="M4 7l13-6 6 18-13 5z" fill="#bfe0ee"/>
    <path d="M4 7l13-6 1.5 2-13 6z" fill="#5a7f95"/>
    <path d="M17 1l6 18 1.5-1.5-5.8-17z" fill="#d8a040"/>
    <path d="M6 11l10-4.5M7 14l10-4.5M8 17l10-4.5" stroke="#9cc8dc" stroke-width="0.8"/>
  </g>
  <!-- feishu -->
  <rect x="305" y="8" width="25" height="25" rx="5" fill="#3d7ef2"/>
  <path d="M309 15q6 2 10 8q3-6 8-8q-3 5-3 12q-3-2-6-2q-4-1-9-10z" fill="#fff"/>
  <!-- folder -->
  <rect x="347" y="38" width="40" height="2" fill="#76b9ed"/>
  <path d="M355 12h8l2 2h10v14h-20z" fill="#e6b43c"/>
  <path d="M355 16h20v12h-20z" fill="#ffd764"/>
  <path d="M361 23h8v5h-8z" fill="#2f8fd8"/>
  <!-- calculator -->
  <rect x="396" y="38" width="40" height="2" fill="#76b9ed"/>
  <rect x="407" y="9" width="16" height="22" rx="1.5" fill="#8fb8de" stroke="#5b8fc0"/>
  <rect x="409" y="11" width="12" height="5" fill="#e8f2fa"/>
  <path d="M409.5 19h11M409.5 22h11M409.5 25h11M409.5 28h11" stroke="#fff" stroke-width="1.3" stroke-dasharray="2 1"/>
  <!-- tray -->
  <path d="M1152 24l6-6 6 6" stroke="#fff" stroke-width="1.2" fill="none"/>
  <path d="M1176.5 15.5h14v9h-14z" stroke="#fff" stroke-width="1.1" fill="none"/>
  <path d="M1183.5 24.5v3M1179 27.5h9" stroke="#fff" stroke-width="1.1"/>
  <rect x="1175" y="14" width="4" height="4" fill="#101010" stroke="#fff" stroke-width="1"/>
  <path d="M1201 18h3l4-4v14l-4-4h-3z" stroke="#fff" stroke-width="1.1" fill="none"/>
  <path d="M1210.5 18q1.5 3 0 6M1213 16q3 5 0 10M1215.5 14q4 7 0 14" stroke="#fff" stroke-width="1" fill="none"/>
  <!-- notification -->
  <path d="M1325 11.5h16.3v13.5h-9l-2 2.5-2-2.5h-3.3z" fill="#fff"/>
  <path d="M1328 15.5h10M1328 18.5h10M1328 21.5h7" stroke="#101010" stroke-width="1.1"/>
  <circle cx="1340.5" cy="27.5" r="8" fill="#2a2a2a" stroke="#8a8a8a" stroke-width="1"/>
  <path d="M1361.5 0v40" stroke="#777" stroke-width="1"/>
</svg>
<div class="a nw" style="left:1330px;top:747px;width:21px;text-align:center;font-size:12px;font-weight:bold;color:#fff;line-height:16px">3</div>
<div class="a nw" style="left:1090px;top:733px;width:50px;text-align:center;font-size:12px;color:#fff;line-height:16px">47%</div>
<div class="a nw" style="left:1090px;top:749px;width:50px;text-align:center;font-size:12px;color:#fff;line-height:16px">内存使用</div>
<div class="a nw" style="left:1222px;top:739px;font-size:13px;color:#fff;line-height:18px">中</div>
<div class="a nw" style="left:1247px;top:731px;width:60px;text-align:center;font-size:12.5px;color:#fff;line-height:16px">10:52</div>
<div class="a nw" style="left:1241px;top:749px;width:72px;text-align:center;font-size:13px;color:#fff;line-height:16px">2023/7/24</div>

</body></html>
